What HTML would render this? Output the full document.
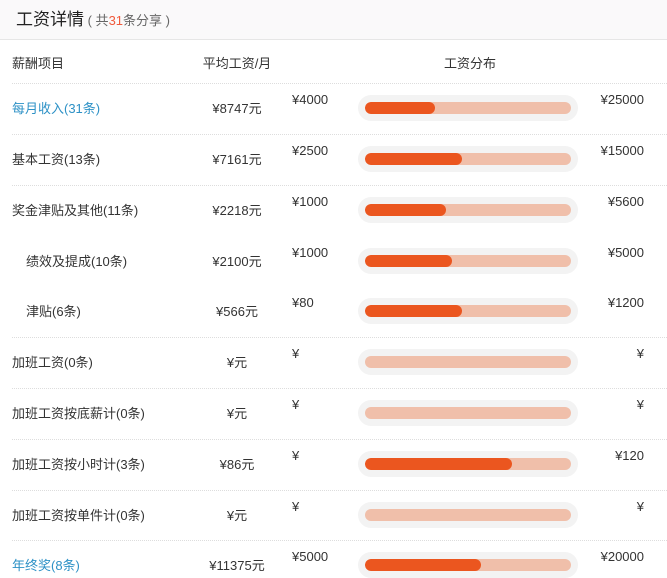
<!DOCTYPE html>
<html><head><meta charset="utf-8"><style>
*{margin:0;padding:0;box-sizing:border-box}
body{width:667px;height:578px;overflow:hidden;background:#fff;font-family:"Liberation Sans","Noto Sans CJK SC",sans-serif;color:#333;font-size:13px;position:relative}
.hd{position:absolute;left:0;top:0;width:667px;height:40px;background:#faf9fa;border-bottom:1px solid #e6e6e6}
.hd .t{position:absolute;left:16px;top:5px;font-size:17px;color:#222}
.hd .s{font-size:13px;color:#666}
.hd .s b{font-weight:normal;color:#f05a3c}
.a{position:absolute;white-space:nowrap}
.ln{position:absolute;left:12px;right:0;border-top:1px dotted #ddd;height:0}
.trk{position:absolute;left:358px;width:220px;height:26px;border-radius:13px;background:#f3f3f3}
.bar{position:absolute;left:7px;top:7px;width:206px;height:12px;border-radius:6px;background:#f0bfaa;overflow:hidden}
.bar i{display:block;height:12px;border-radius:6px;background:#eb561f}
.blue{color:#2d91c6}
.c{width:120px;text-align:center;left:177px;margin-top:-3px}
.l{margin-top:-3px}
.r{right:23px;text-align:right}
</style></head><body>
<div class="hd"><span class="t">工资详情<span class="s"> ( 共<b>31</b>条分享 )</span></span></div>
<div class="a" style="left:12px;top:53px">薪酬项目</div>
<div class="a c" style="top:56px">平均工资/月</div>
<div class="a" style="left:444px;top:53px">工资分布</div>

<div class="ln" style="top:83px"></div>
<div class="ln" style="top:134px"></div>
<div class="ln" style="top:185px"></div>
<div class="ln" style="top:337px"></div>
<div class="ln" style="top:388px"></div>
<div class="ln" style="top:439px"></div>
<div class="ln" style="top:490px"></div>
<div class="ln" style="top:540px"></div>

<div class="a l blue" style="left:12px;top:101px">每月收入(31条)</div><div class="a c" style="top:101px">¥8747元</div>
<div class="a" style="left:292px;top:92px">¥4000</div><div class="a r" style="top:92px">¥25000</div>
<div class="trk" style="top:95px"><div class="bar"><i style="width:70px"></i></div></div>

<div class="a l" style="left:12px;top:152px">基本工资(13条)</div><div class="a c" style="top:152px">¥7161元</div>
<div class="a" style="left:292px;top:143px">¥2500</div><div class="a r" style="top:143px">¥15000</div>
<div class="trk" style="top:146px"><div class="bar"><i style="width:97px"></i></div></div>

<div class="a l" style="left:12px;top:203px">奖金津贴及其他(11条)</div><div class="a c" style="top:203px">¥2218元</div>
<div class="a" style="left:292px;top:194px">¥1000</div><div class="a r" style="top:194px">¥5600</div>
<div class="trk" style="top:197px"><div class="bar"><i style="width:81px"></i></div></div>

<div class="a l" style="left:26px;top:254px">绩效及提成(10条)</div><div class="a c" style="top:254px">¥2100元</div>
<div class="a" style="left:292px;top:245px">¥1000</div><div class="a r" style="top:245px">¥5000</div>
<div class="trk" style="top:248px"><div class="bar"><i style="width:87px"></i></div></div>

<div class="a l" style="left:26px;top:304px">津贴(6条)</div><div class="a c" style="top:304px">¥566元</div>
<div class="a" style="left:292px;top:295px">¥80</div><div class="a r" style="top:295px">¥1200</div>
<div class="trk" style="top:298px"><div class="bar"><i style="width:97px"></i></div></div>

<div class="a l" style="left:12px;top:355px">加班工资(0条)</div><div class="a c" style="top:355px">¥元</div>
<div class="a" style="left:292px;top:346px">¥</div><div class="a r" style="top:346px">¥</div>
<div class="trk" style="top:349px"><div class="bar"></div></div>

<div class="a l" style="left:12px;top:406px">加班工资按底薪计(0条)</div><div class="a c" style="top:406px">¥元</div>
<div class="a" style="left:292px;top:397px">¥</div><div class="a r" style="top:397px">¥</div>
<div class="trk" style="top:400px"><div class="bar"></div></div>

<div class="a l" style="left:12px;top:457px">加班工资按小时计(3条)</div><div class="a c" style="top:457px">¥86元</div>
<div class="a" style="left:292px;top:448px">¥</div><div class="a r" style="top:448px">¥120</div>
<div class="trk" style="top:451px"><div class="bar"><i style="width:147px"></i></div></div>

<div class="a l" style="left:12px;top:508px">加班工资按单件计(0条)</div><div class="a c" style="top:508px">¥元</div>
<div class="a" style="left:292px;top:499px">¥</div><div class="a r" style="top:499px">¥</div>
<div class="trk" style="top:502px"><div class="bar"></div></div>

<div class="a l blue" style="left:12px;top:558px">年终奖(8条)</div><div class="a c" style="top:558px">¥11375元</div>
<div class="a" style="left:292px;top:549px">¥5000</div><div class="a r" style="top:549px">¥20000</div>
<div class="trk" style="top:552px"><div class="bar"><i style="width:116px"></i></div></div>
</body></html>
